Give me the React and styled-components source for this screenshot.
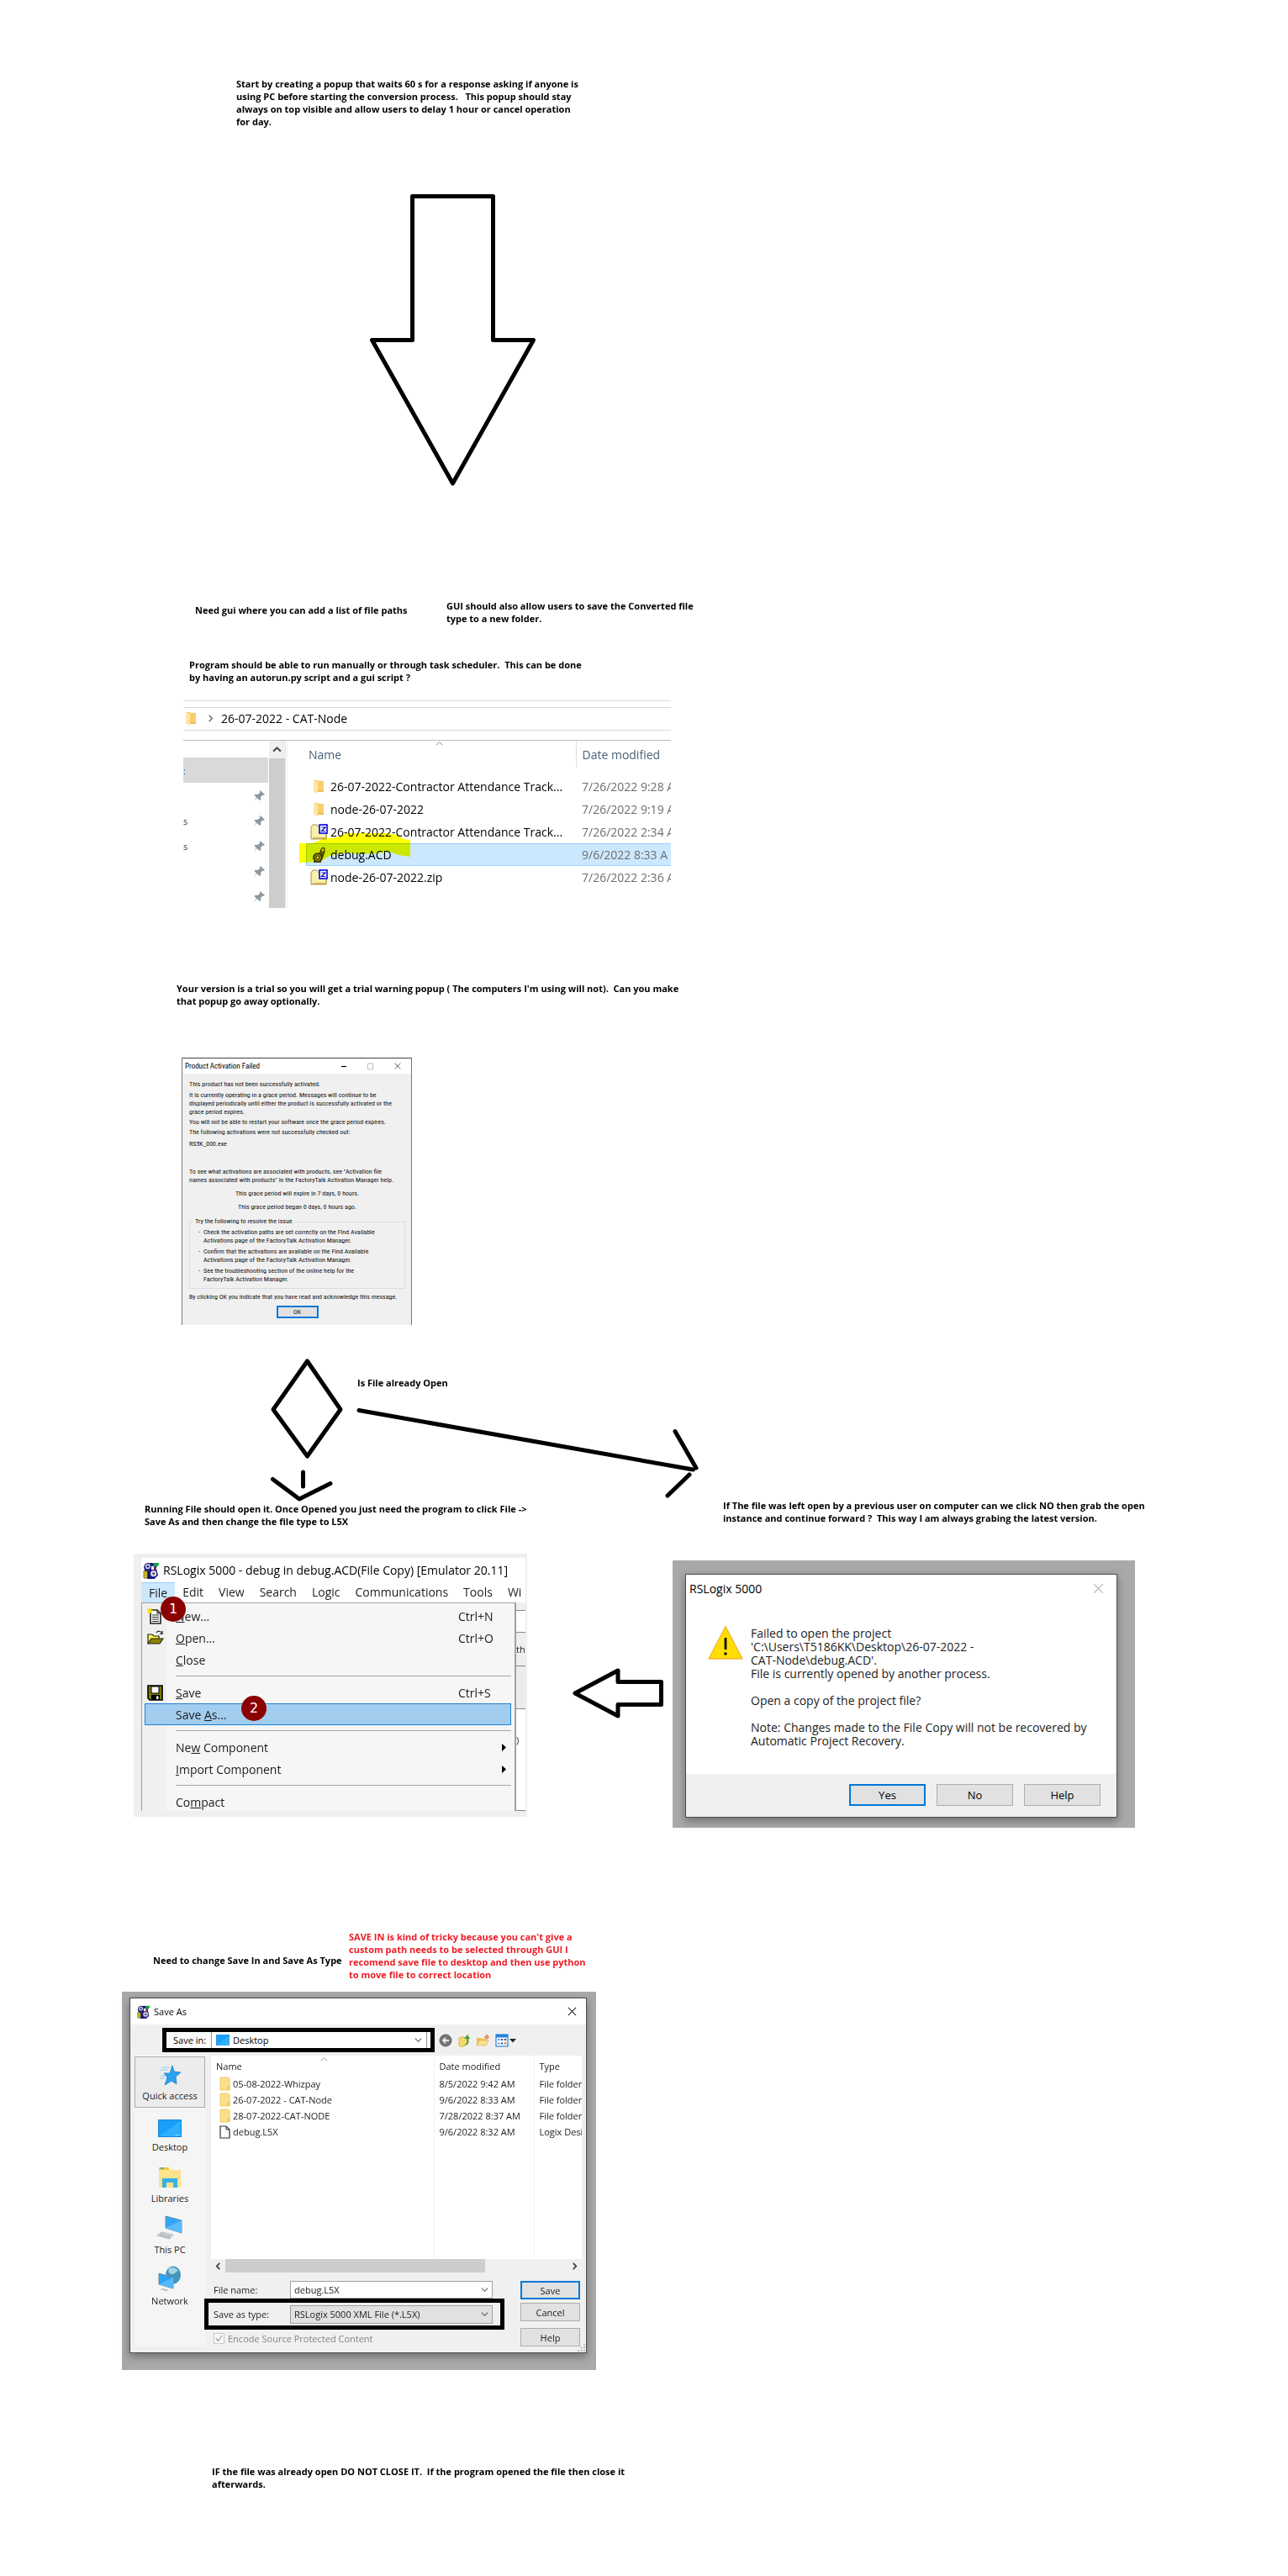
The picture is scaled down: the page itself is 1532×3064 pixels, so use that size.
import React from 'react';
import styled, { createGlobalStyle, css } from 'styled-components';

const UI = "'Open Sans', 'Noto Sans', sans-serif";
const SMALL = "'Roboto Condensed', Roboto, 'Open Sans', sans-serif";

const GlobalStyle = createGlobalStyle`
  *, *::before, *::after { box-sizing: border-box; }
  body { margin: 0; background: #fff; color: #000; font-family: ${UI}; }
  p, ul, table { margin: 0; padding: 0; }
  button, input, select { font: inherit; color: inherit; }
`;

/* ---------- canvas ---------- */
const Canvas = styled.main`
  position: relative;
  width: 100%;
  min-width: 1400px;
  min-height: 3064px;
  overflow: hidden;
  background: #fff;
`;
const Node = styled.div`
  position: absolute;
  left: ${(p) => p.$x}px;
  top: ${(p) => p.$y}px;
`;
const NoteText = styled.p`
  font-size: 11px;
  line-height: 15px;
  font-weight: 700;
  white-space: pre;
  color: ${(p) => (p.$red ? '#ed1c24' : '#000')};
`;
const Note = ({ x, y, red, children }) => (
  <Node $x={x} $y={y}><NoteText $red={red}>{children}</NoteText></Node>
);
const Drawing = styled.svg`
  display: block;
  fill: none;
  stroke: #000;
  stroke-width: 5;
  stroke-linejoin: round;
  stroke-linecap: round;
`;

/* ---------- icons ---------- */
const Svg = styled.svg`display: block; flex: none;`;

const Chevron = ({ dir = 'down', size = 9, color = '#444', w = 1.2 }) => {
  const d = { down: 'M1 3l4 4 4-4', up: 'M1 7l4-4 4 4', left: 'M7 1L3 5l4 4', right: 'M3 1l4 4-4 4' }[dir];
  return <Svg width={size} height={size} viewBox="0 0 10 10"><path d={d} fill="none" stroke={color} strokeWidth={w} /></Svg>;
};
const SlimFolder = () => (
  <Svg width="13" height="17" viewBox="0 0 13 17">
    <path d="M0 1h5l1 1h6v12H0z" fill="#f8cf6e" />
    <path d="M0 1l5 2v14l-5-2z" fill="#fde6a6" />
    <path d="M5 13h7v2H5z" fill="#eebd55" />
  </Svg>
);
const ZipIcon = () => (
  <Svg width="21" height="19" viewBox="0 0 21 19">
    <path d="M1 4l2-3h5l2 3h9v14H1z" fill="#f7efaa" stroke="#a8964a" />
    <path d="M3 17h16V7" fill="none" stroke="#c9b457" strokeWidth="2" />
    <rect x="11" y="1" width="9" height="10" fill="#fff" stroke="#0000e6" strokeWidth="1.6" />
    <path d="M13.500 4H18l-4.500 4.500H18" fill="none" stroke="#0000b0" strokeWidth="1.2" />
  </Svg>
);
const AcdIcon = () => (
  <Svg width="18" height="20" viewBox="0 0 18 20">
    <path d="M9 9l2-6 2-2 2 1v4l-2 6-3 5z" fill="#6b6300" stroke="#2e2a00" />
    <circle cx="7" cy="13" r="5" fill="#8f8400" stroke="#2e2a00" strokeWidth="1.6" />
    <circle cx="7" cy="13" r="2" fill="#e6dc3c" stroke="#2e2a00" />
    <circle cx="13" cy="4" r="1.4" fill="#e6dc3c" />
    <path d="M2 18h9" stroke="#4a4400" strokeWidth="2" />
  </Svg>
);
const PinIcon = () => (
  <Svg width="13" height="13" viewBox="0 0 13 13">
    <path d="M7.500 0l5.500 5-1.500 1-1-.5-2.500 2.500.3 3-1.500 1-3-3L0 13l3-4.500-2.500-2.500 1-1.300 3 .3L7.500 2.500 6.800 1z" fill="#8c979f" />
  </Svg>
);
const LogixIcon = ({ size = 19 }) => (
  <Svg width={size} height={size} viewBox="0 0 19 19">
    <path d="M1 6l2-4 6-1 8 1-2 5 2 8-4 4H5z" fill="#15157a" />
    <circle cx="5.500" cy="5" r="3.500" fill="#c4c8d2" stroke="#15157a" />
    <circle cx="5.500" cy="5" r="1.200" fill="#15157a" />
    <path d="M9 4h4v5H9z" fill="#fff" stroke="#15157a" />
    <path d="M12 1h6v2l-3 3-3-2z" fill="#12a63c" />
    <path d="M13 6h2v3h-2z" fill="#d61d1d" />
    <circle cx="12" cy="13" r="4" fill="#d3d6de" stroke="#15157a" />
    <circle cx="12" cy="13" r="1.400" fill="#555a80" />
    <path d="M1 10h4v8H1z" fill="#f3e11a" stroke="#333" strokeWidth=".7" />
    <path d="M3 11v6" stroke="#333" strokeDasharray="1 1" />
  </Svg>
);
const WarnIcon = () => (
  <Svg width="42" height="41" viewBox="0 0 42 41">
    <path d="M21 1.500L41 40H1z" fill="#ffde00" stroke="#f5b73a" strokeWidth="1.400" strokeLinejoin="round" />
    <path d="M21 15v14" stroke="#111" strokeWidth="2.800" />
    <circle cx="21" cy="34" r="1.800" fill="#111" />
  </Svg>
);
const NewIcon = () => (
  <Svg width="18" height="20" viewBox="0 0 18 20">
    <path d="M4 3h8l4 4v12H4z" fill="#fff" stroke="#222" strokeWidth="1.600" />
    <path d="M12 3v4h4M6 9h8M6 11.500h8M6 14h8M6 16.500h8" fill="none" stroke="#222" strokeWidth="1.200" />
    <path d="M3 0v8M0 4h7M0 1l6 6M6 1L0 7" stroke="#f2e600" strokeWidth="1.200" />
  </Svg>
);
const OpenIcon = () => (
  <Svg width="20" height="18" viewBox="0 0 20 18">
    <path d="M1 16V5h5l2 2h6v3" fill="#fff34a" stroke="#222" strokeWidth="1.200" />
    <path d="M1 16l4-6h14l-4 6z" fill="#8a8300" stroke="#222" strokeWidth="1.200" />
    <path d="M11 3c2-3 5-2 7 1m0-3v3.500h-3" fill="none" stroke="#222" strokeWidth="1.200" />
  </Svg>
);
const SaveIcon = () => (
  <Svg width="19" height="19" viewBox="0 0 19 19">
    <path d="M1 1h17v17H3l-2-2z" fill="#7a7a00" stroke="#000" strokeWidth="1.600" />
    <path d="M5 2h9v8H5z" fill="#fff" stroke="#000" />
    <path d="M5 12h10v6H5z" fill="#000" />
    <path d="M11 13.500h2.500V17H11z" fill="#fff" />
  </Svg>
);
const FolderIcon = () => (
  <Svg width="13" height="17" viewBox="0 0 13 17">
    <path d="M1 1h10l1 2v13H1z" fill="#fbdf8b" stroke="#f0cd6d" />
    <path d="M9 11h4v5H9z" fill="#f5cf68" />
  </Svg>
);
const PageIcon = () => (
  <Svg width="13" height="16" viewBox="0 0 13 16">
    <path d="M1 1h7l4 4v10H1z" fill="#fff" stroke="#333" strokeWidth="1.200" />
    <path d="M8 1v4h4" fill="none" stroke="#333" />
  </Svg>
);
const Monitor = ({ w, h }) => (
  <Svg width={w} height={h} viewBox="0 0 28 21" preserveAspectRatio="none">
    <rect x=".5" y=".5" width="27" height="20" fill="#18a0fb" stroke="#1784d8" />
    <path d="M1 20L27 2v18z" fill="#2fb0ff" />
    <path d="M21 18.500h5" stroke="#d8f1ff" strokeDasharray="1 1" />
  </Svg>
);
const StarIcon = () => (
  <Svg width="26" height="25" viewBox="0 0 26 25">
    <path d="M16 1l2 7 8 1-6 5 1 9-6-4-8 5 3-9-4-5h7z" fill="#2da2ee" stroke="#1c7fc8" strokeWidth=".8" />
    <path d="M3 3h10M1 6h10M2 13h5M1 16h6" stroke="#8ccdf6" />
  </Svg>
);
const LibraryIcon = () => (
  <Svg width="28" height="26" viewBox="0 0 28 26">
    <path d="M1 1h12v3h14v21H1z" fill="#ffe28c" />
    <path d="M1 1h12v3H1z" fill="#f9c935" />
    <path d="M3 1h4v2H3z" fill="#3ab3e6" />
    <path d="M5 25V14h18v11h-5v-6h-8v6z" fill="#36b1e8" />
  </Svg>
);
const PcIcon = () => (
  <Svg width="30" height="29" viewBox="0 0 30 29">
    <path d="M10 1l19 5v15L10 15z" fill="#33a6f7" stroke="#6d8ba3" />
    <path d="M10 15l19-9v15z" fill="#5bbcff" />
    <path d="M5 20l14 3-4 5-15-4z" fill="#d4d8dc" stroke="#a9afb5" strokeWidth=".8" />
    <path d="M4 22l12 3M3 24l12 3" stroke="#9097a0" strokeDasharray="2 1" />
  </Svg>
);
const NetworkIcon = () => (
  <Svg width="28" height="30" viewBox="0 0 28 30">
    <ellipse cx="18" cy="11" rx="9" ry="10.500" fill="#4496bb" />
    <path d="M13 3c4-2 8-1 11 3-4 1-4 5-8 4s-4-4-3-7z" fill="#a4d3e3" />
    <path d="M1 9l17 5v13L1 22z" fill="#2ba3f5" stroke="#6d8ba3" />
    <path d="M1 22L18 14v13z" fill="#56b9ff" />
    <path d="M5 27l8 2-3 1-7-2z" fill="#aab4bc" />
  </Svg>
);
const BackIcon = () => (
  <Svg width="16" height="16" viewBox="0 0 16 16">
    <circle cx="8" cy="8" r="7" fill="#777" stroke="#5c5c5c" />
    <path d="M12 8H5m3-3L5 8l3 3" fill="none" stroke="#e8e8e8" strokeWidth="1.800" />
  </Svg>
);
const UpFolderIcon = () => (
  <Svg width="14" height="16" viewBox="0 0 14 16">
    <path d="M1 5l5-2 1 2 5-1v8l-8 4-3-2z" fill="#f6d873" stroke="#d6ad3f" strokeWidth=".8" />
    <path d="M6 14c4-1 5-4 4-8H7l4-5 3 5h-2c1 5-1 8-6 8z" fill="#3aa537" />
  </Svg>
);
const NewFolderIcon = () => (
  <Svg width="16" height="16" viewBox="0 0 16 16">
    <path d="M1 5h5l1 1h5v8H1z" fill="#eec04e" />
    <path d="M1 14l3-6h11l-3 6z" fill="#fbe08c" stroke="#dcb24c" strokeWidth=".7" />
    <circle cx="13" cy="4" r="2.300" fill="#f26b3a" />
    <path d="M13 0v8M9 4h7" stroke="#f7a06f" />
  </Svg>
);
const ViewIcon = () => (
  <Svg width="25" height="16" viewBox="0 0 25 16">
    <rect x="1" y="1" width="14" height="14" fill="#fff" stroke="#2a83dd" strokeWidth="1.200" />
    <path d="M1 1h14v3.500H1z" fill="#2a83dd" />
    <path d="M3 7h2.500M3 11.500h2.500" stroke="#7a9fd0" strokeWidth="2" />
    <path d="M6.800 7h2.500M6.800 11.500h2.500" stroke="#2a62c4" strokeWidth="2" />
    <path d="M10.800 7h2.500" stroke="#555" strokeWidth="2" />
    <path d="M10.800 11.500h2.500" stroke="#e05a2a" strokeWidth="2" />
    <path d="M17 6h8l-4 4.500z" fill="#222" />
  </Svg>
);
const Grip = () => (
  <Svg width="9" height="9" viewBox="0 0 9 9"><path d="M7 0h2v2H7zM7 3.500h2v2H7zM7 7h2v2H7zM3.500 3.500h2v2h-2zM3.500 7h2v2h-2zM0 7h2v2H0z" fill="#bbb" /></Svg>
);
const CloseIcon = ({ color, size = 12 }) => (
  <Svg width={size} height={size} viewBox="0 0 12 12"><path d="M1 1l10 10M11 1L1 11" stroke={color} strokeWidth="1.100" /></Svg>
);

/* ---------- shared controls ---------- */
const Row = styled.div`display: flex; align-items: center; gap: ${(p) => p.$gap || 0}px;`;
const Grow = styled.span`flex: 1;`;
const IconButton = styled.button`
  display: flex;
  align-items: center;
  justify-content: center;
  padding: 0;
  border: 0;
  background: none;
`;
const PushButton = styled.button`
  height: ${(p) => p.$h}px;
  width: ${(p) => p.$w}px;
  padding: 0;
  border: ${(p) => (p.$primary ? '2px solid #0078d7' : '1px solid #adadad')};
  background: #e1e1e1;
  font-size: ${(p) => p.$font}px;
  line-height: 1;
`;
const Backdrop = styled.section`
  width: ${(p) => p.$w}px;
  padding: ${(p) => p.$pad};
  background: #a9a9a9;
`;
const Dialog = styled.div`
  display: flex;
  flex-direction: column;
  border: 1px solid #4d4d4d;
  background: ${(p) => p.$bg || '#fff'};
  box-shadow: 0 4px 10px rgba(0, 0, 0, .35);
`;

/* ---------- file explorer ---------- */
const Explorer = styled.section`
  position: relative;
  width: 580px;
  overflow: hidden;
  border-top: 1px solid #d9d9d9;
  font-size: 14px;
`;
const Address = styled.div`
  display: flex;
  align-items: center;
  height: 28px;
  margin: 7px 0 11px;
  padding: 0 0 2px 3px;
  border: solid #d9d9d9;
  border-width: 1px 0;
`;
const Crumb = styled.span`margin-left: ${(p) => p.$gap}px; line-height: 19px; white-space: nowrap;`;
const Panes = styled.div`display: flex; height: 200px; border-top: 1px solid #bdbdbd;`;
const SidePane = styled.div`width: 101px; padding-top: 20px;`;
const SideRow = styled.div`
  display: flex;
  align-items: center;
  justify-content: space-between;
  height: 30px;
  padding-right: 4px;
  background: ${(p) => (p.$active ? '#d9d9d9' : 'transparent')};
  color: ${(p) => (p.$active ? '#0078d7' : '#16324f')};
  font-size: 11px;
`;
const VScroll = styled.div`
  width: 20px;
  margin-left: 1px;
  background: #cdcdcd;
  border-right: 1px solid #e8e8e8;
`;
const VScrollButton = styled(IconButton)`width: 100%; height: 21px; background: #f0f0f0;`;
const ListPane = styled.div`flex: 1; padding-left: 22px; margin-left: 1px; border-left: 1px solid #f0f0f0; overflow: hidden;`;
const FileTable = styled.table`
  width: 455px;
  table-layout: fixed;
  border-collapse: collapse;
  th { position: relative; height: 32px; padding: 0 0 0 3px; text-align: left; font-weight: 400; color: #4c607a; }
  th + th { padding-left: 7px; border-left: 1px solid #e0e0e0; }
  td { height: 27px; padding: 0 0 0 5px; white-space: nowrap; line-height: 19px; }
  td + td { padding-left: 7px; color: #6d6d6d; }
`;
const SortMark = styled.span`position: absolute; left: 154px; top: -1px;`;
const Spacer = styled.tr`td { height: 9px; }`;
const FileRow = styled.tr`
  ${(p) => p.$selected && css`
    background: #cce8ff;
    td { box-shadow: inset 0 1px #99d1ff, inset 0 -1px #99d1ff; }
    td:first-child { box-shadow: inset 1px 1px #99d1ff, inset 0 -1px #99d1ff; }
  `}
`;
const IconSlot = styled.span`display: flex; flex: none; justify-content: center; width: 21px;`;
const Highlight = styled.svg`
  position: absolute;
  left: 138px;
  top: 157px;
  mix-blend-mode: multiply;
  pointer-events: none;
`;
const files = [
  ['26-07-2022-Contractor Attendance Track...', '7/26/2022 9:28 AM', SlimFolder],
  ['node-26-07-2022', '7/26/2022 9:19 AM', SlimFolder],
  ['26-07-2022-Contractor Attendance Track...', '7/26/2022 2:34 AM', ZipIcon],
  ['debug.ACD', '9/6/2022 8:33 A', AcdIcon],
  ['node-26-07-2022.zip', '7/26/2022 2:36 AM', ZipIcon],
];
const ExplorerWindow = () => (
  <Explorer>
    <Address>
      <SlimFolder />
      <Crumb $gap={12}><Chevron dir="right" color="#777" w={1.8} /></Crumb>
      <Crumb $gap={8}>26-07-2022 - CAT-Node</Crumb>
    </Address>
    <Panes>
      <SidePane>
        <SideRow $active>:</SideRow>
        {['', 's', 's', '', ''].map((t, i) => (
          <SideRow key={i}><span>{t}</span><PinIcon /></SideRow>
        ))}
      </SidePane>
      <VScroll><VScrollButton aria-label="Scroll up"><Chevron dir="up" size={11} w={1.8} /></VScrollButton></VScroll>
      <ListPane>
        <FileTable>
          <colgroup><col width="321" /><col /></colgroup>
          <thead>
            <tr>
              <th>Name<SortMark><Chevron dir="up" size={9} color="#777" w={1} /></SortMark></th>
              <th>Date modified</th>
            </tr>
          </thead>
          <tbody>
            <Spacer><td /></Spacer>
            {files.map(([name, date, Icon], i) => (
              <FileRow key={i} $selected={i === 3}>
                <td><Row><IconSlot><Icon /></IconSlot><Crumb $gap={3}>{name}</Crumb></Row></td>
                <td>{date}</td>
              </FileRow>
            ))}
          </tbody>
        </FileTable>
      </ListPane>
    </Panes>
    <Highlight width="132" height="36" viewBox="0 0 132 36">
      <path d="M0 12h16l12-5 16-2 12-5h48l12 2 8 5 8 1v20l-14-2-10-4-16 2-20 1-16-2-20 4-8 5-20 3H0z" fill="#ff0" />
    </Highlight>
  </Explorer>
);

/* ---------- activation dialog ---------- */
const Activation = styled.section`
  width: 274px;
  border: solid #777;
  border-width: 1px 1px 0;
  border-top-color: #444;
  background: #f0f0f0;
  font-family: ${SMALL};
  font-size: 8px;
  line-height: 10px;
  color: #111;
`;
const ActivationTitle = styled.header`
  display: flex;
  align-items: center;
  height: 18px;
  padding: 0 12px 0 3px;
  background: #fff;
  color: #000;
  font-size: 9px;
`;
const ActivationBody = styled.div`display: flex; flex-direction: column; padding: 0 7px 8px 8px;`;
const Para = styled.p`
  margin-top: ${(p) => p.$gap}px;
  white-space: pre;
  text-align: ${(p) => (p.$center ? 'center' : 'left')};
`;
const Group = styled.fieldset`
  margin: 7px 0 0;
  padding: 3px 10px 5px;
  border: 1px solid #dcdcdc;
  legend { margin-left: -7px; padding: 0 3px; }
`;
const Tips = styled.ul`
  display: flex;
  flex-direction: column;
  gap: 3px;
  list-style: none;
  li { display: flex; gap: 4px; white-space: pre; }
`;
const ButtonLine = styled.div`display: flex; justify-content: center; margin-top: 5px;`;
const ActivationWindow = () => (
  <Activation>
    <ActivationTitle>
      Product Activation Failed<Grow />
      <Row $gap={25}>
        <IconButton aria-label="Minimize"><Svg width="6" height="9"><path d="M0 4.500h6" stroke="#000" strokeWidth="1.200" /></Svg></IconButton>
        <IconButton aria-label="Maximize"><Svg width="7" height="9" viewBox="0 0 7 9"><path d="M.5 1h6v7h-6z" fill="none" stroke="#bbb" /></Svg></IconButton>
        <IconButton aria-label="Close"><CloseIcon color="#333" size={8} /></IconButton>
      </Row>
    </ActivationTitle>
    <ActivationBody>
      <Para $gap={8}>This product has not been successfully activated.</Para>
      <Para $gap={3}>{'It is currently operating in a grace period. Messages will continue to be\ndisplayed periodically until either the product is successfully activated or the\ngrace period expires.'}</Para>
      <Para $gap={2}>You will not be able to restart your software once the grace period expires.</Para>
      <Para $gap={2}>The following activations were not successfully checked out:</Para>
      <Para $gap={4}>RS5K_000.exe</Para>
      <Para $gap={23}>{'To see what activations are associated with products, see "Activation file\nnames associated with products" in the FactoryTalk Activation Manager help.'}</Para>
      <Para $gap={6} $center>This grace period will expire in 7 days, 0 hours.</Para>
      <Para $gap={6} $center>This grace period began 0 days, 0 hours ago.</Para>
      <Group>
        <legend>Try the following to resolve the issue</legend>
        <Tips>
          <li><span>-</span><span>{'Check the activation paths are set correctly on the Find Available\nActivations page of the FactoryTalk Activation Manager.'}</span></li>
          <li><span>-</span><span>{'Confirm that the activations are available on the Find Available\nActivations page of the FactoryTalk Activation Manager.'}</span></li>
          <li><span>-</span><span>{'See the troubleshooting section of the online help for the\nFactoryTalk Activation Manager.'}</span></li>
        </Tips>
      </Group>
      <Para $gap={5}>By clicking OK you indicate that you have read and acknowledge this message.</Para>
      <ButtonLine><PushButton $primary $h={15} $w={50} $font={8}>OK</PushButton></ButtonLine>
    </ActivationBody>
  </Activation>
);

/* ---------- RSLogix menu ---------- */
const LogixFrame = styled.section`
  position: relative;
  width: 468px;
  padding: 5px 2px 7px 9px;
  background: #efefef;
`;
const LogixInner = styled.div`height: 301px; overflow: hidden; background: #fff; font-size: 14px; color: #1c1c1c;`;
const LogixTitle = styled.header`display: flex; align-items: center; gap: 4px; height: 29px; padding-left: 2px; color: #000; white-space: nowrap;`;
const MenuBar = styled.nav`display: flex; height: 24px;`;
const MenuTab = styled.button`
  flex: none;
  padding: 0 9px;
  border: ${(p) => (p.$open ? '1px solid #99d1ff' : '0')};
  border-width: ${(p) => (p.$open ? '1px 0 0' : '0')};
  background: ${(p) => (p.$open ? '#cce8ff' : 'none')};
  line-height: 22px;
`;
const MenuArea = styled.div`display: flex;`;
const Menu = styled.div`
  width: 446px;
  padding: 2px 4px 0 3px;
  border: solid #a0a0a0;
  border-width: 1px 2px 0 1px;
  background: linear-gradient(90deg, #f0f0f0 29px, #f6f6f6 29px);
`;
const MenuItem = styled.button`
  display: flex;
  align-items: center;
  width: 100%;
  height: 26px;
  padding: 0 5px 0 2px;
  border: 1px solid ${(p) => (p.$active ? '#1883d7' : 'transparent')};
  background: ${(p) => (p.$active ? '#a3cdee' : 'none')};
  text-align: left;
`;
const MenuIcon = styled.span`width: 34px; flex: none;`;
const Shortcut = styled.span`width: 57px;`;
const Separator = styled.hr`height: 1px; margin: 6px 0 6px 37px; border: 0; background: #a8a8a8;`;
const Behind = styled.div`flex: 1; min-width: 0; display: flex; flex-direction: column; background: #efefef;`;
const Patch = styled.div`
  height: ${(p) => p.$h}px;
  overflow: hidden;
  border-bottom: 1px solid #888;
  background: ${(p) => p.$bg};
  font-size: 11px;
  line-height: ${(p) => p.$h}px;
`;
const Paren = styled.span`display: block; line-height: 74px;`;
const Badge = styled.span`
  position: absolute;
  left: ${(p) => p.$x}px;
  top: ${(p) => p.$y}px;
  display: flex;
  align-items: center;
  justify-content: center;
  width: 30px;
  height: 30px;
  border-radius: 50%;
  background: #8b0000;
  color: #fff;
  font: 16px/1 'DejaVu Sans', sans-serif;
`;
const SubArrow = () => <Svg width="5" height="9" viewBox="0 0 5 9"><path d="M0 0l5 4.500L0 9z" fill="#000" /></Svg>;
const LogixWindow = () => (
  <LogixFrame>
    <LogixInner>
      <LogixTitle><LogixIcon size={20} />RSLogix 5000 - debug in debug.ACD(File Copy) [Emulator 20.11]</LogixTitle>
      <MenuBar>
        <MenuTab $open>File</MenuTab><MenuTab>Edit</MenuTab><MenuTab>View</MenuTab><MenuTab>Search</MenuTab>
        <MenuTab>Logic</MenuTab><MenuTab>Communications</MenuTab><MenuTab>Tools</MenuTab><MenuTab>Wi</MenuTab>
      </MenuBar>
      <MenuArea>
        <Menu>
          <MenuItem><MenuIcon><NewIcon /></MenuIcon><span><u>N</u>ew...</span><Grow /><Shortcut>Ctrl+N</Shortcut></MenuItem>
          <MenuItem><MenuIcon><OpenIcon /></MenuIcon><span><u>O</u>pen...</span><Grow /><Shortcut>Ctrl+O</Shortcut></MenuItem>
          <MenuItem><MenuIcon /><span><u>C</u>lose</span></MenuItem>
          <Separator />
          <MenuItem><MenuIcon><SaveIcon /></MenuIcon><span><u>S</u>ave</span><Grow /><Shortcut>Ctrl+S</Shortcut></MenuItem>
          <MenuItem $active><MenuIcon /><span>Save <u>A</u>s...</span></MenuItem>
          <Separator />
          <MenuItem><MenuIcon /><span>Ne<u>w</u> Component</span><Grow /><SubArrow /></MenuItem>
          <MenuItem><MenuIcon /><span><u>I</u>mport Component</span><Grow /><SubArrow /></MenuItem>
          <Separator />
          <MenuItem><MenuIcon /><span>Co<u>m</u>pact</span></MenuItem>
        </Menu>
        <Behind>
          <Patch $h={10} $bg="#efefef" />
          <Patch $h={26} $bg="#fff" />
          <Patch $h={40} $bg="#efefef">th</Patch>
          <Patch $h={51} $bg="#ececec" />
          <Patch $h={121} $bg="#fff"><Paren>)</Paren></Patch>
        </Behind>
      </MenuArea>
    </LogixInner>
    <Badge $x={32} $y={51}>1</Badge>
    <Badge $x={128} $y={169}>2</Badge>
  </LogixFrame>
);

/* ---------- failed-to-open dialog ---------- */
const FailTitle = styled.header`
  display: flex;
  align-items: center;
  justify-content: space-between;
  height: 32px;
  padding: 0 15px 0 4px;
  font-size: 14px;
`;
const FailBody = styled.div`
  display: flex;
  gap: 9px;
  padding: 28px 0 31px 26px;
  font-size: 14px;
  line-height: 16px;
  white-space: pre;
  color: #222;
`;
const FailMessage = styled.p`padding: 2px 0 0;`;
const FailFooter = styled.footer`
  display: flex;
  justify-content: flex-end;
  gap: 13px;
  padding: 12px 19px 13px;
  background: #f0f0f0;
`;
const FailWindow = () => (
  <Backdrop $w={550} $pad="16px 21px 12px 15px">
    <Dialog>
      <FailTitle>RSLogix 5000<IconButton aria-label="Close"><CloseIcon color="#b5b5b5" size={13} /></IconButton></FailTitle>
      <FailBody>
        <WarnIcon />
        <FailMessage>{"Failed to open the project\n'C:\\Users\\T5186KK\\Desktop\\26-07-2022 -\nCAT-Node\\debug.ACD'.\nFile is currently opened by another process.\n\nOpen a copy of the project file?\n\nNote: Changes made to the File Copy will not be recovered by\nAutomatic Project Recovery."}</FailMessage>
      </FailBody>
      <FailFooter>
        <PushButton $primary $h={26} $w={91} $font={13}>Yes</PushButton>
        <PushButton $h={26} $w={91} $font={13}>No</PushButton>
        <PushButton $h={26} $w={91} $font={13}>Help</PushButton>
      </FailFooter>
    </Dialog>
  </Backdrop>
);

/* ---------- Save As dialog ---------- */
const SaveTitle = styled.header`
  display: flex;
  align-items: center;
  gap: 4px;
  height: 31px;
  padding: 0 11px 0 8px;
  background: #fff;
  font-size: 11px;
`;
const Toolbar = styled.div`display: flex; align-items: center; padding: 4px 0 0 38px; font-size: 11px;`;
const Marker = styled.div`
  display: flex;
  align-items: center;
  border: 5px solid #000;
`;
const LocationMarker = styled(Marker)`width: 324px; height: 29px; padding-right: 4px; background: #fafafa;`;
const LocationLabel = styled.label`width: 53px; padding-left: 8px;`;
const LocationBox = styled.span`
  display: flex;
  flex: 1;
  align-items: center;
  gap: 4px;
  height: 100%;
  padding: 0 5px;
  border: solid #999;
  border-width: 0 1px;
  background: #fff;
`;
const PlainSelect = styled.select`
  flex: 1;
  min-width: 0;
  height: 100%;
  padding: 0;
  border: 0;
  appearance: none;
  background: none;
`;
const Tools = styled.div`display: flex; gap: 7px; margin-left: 5px;`;
const SaveMain = styled.div`display: flex; padding: 3px 5px 7px;`;
const Places = styled.nav`
  display: flex;
  flex-direction: column;
  flex: none;
  width: 84px;
  padding-top: 2px;
  background: #f5f5f5;
`;
const Place = styled.button`
  display: flex;
  flex-direction: column;
  align-items: center;
  justify-content: flex-end;
  gap: 4px;
  height: 61px;
  padding: 0 0 6px;
  border: 1px solid ${(p) => (p.$active ? '#adadad' : 'transparent')};
  background: ${(p) => (p.$active ? '#ececec' : 'none')};
  font-size: 11px;
  line-height: 15px;
  color: #222;
`;
const SavePane = styled.div`display: flex; flex-direction: column; flex: 1; min-width: 0; margin: 1px 0 0 7px; font-size: 11px; color: #222;`;
const SaveTable = styled.table`
  width: 100%;
  height: 242px;
  table-layout: fixed;
  border-collapse: collapse;
  background: #fff;
  th { position: relative; height: 24px; padding: 0 0 0 6px; font-weight: 400; text-align: left; }
  td { height: 19px; padding: 0 0 0 10px; line-height: 15px; white-space: nowrap; overflow: hidden; }
  th + th, td + td { padding-left: 6px; border-left: 1px solid #edf3f8; }
  tr:last-child td { height: auto; }
`;
const SaveSort = styled.span`position: absolute; left: 130px; top: 0;`;
const FileName = styled.span`margin-left: 3px;`;
const HScroll = styled.div`display: flex; align-items: center; height: 16px; padding: 0 4px;`;
const HThumb = styled.div`width: 309px; height: 16px; margin: 0 auto 0 4px; background: #cdcdcd;`;
const SaveForm = styled.form`display: flex; justify-content: space-between; padding-right: 2px;`;
const Fields = styled.div`width: 349px; padding-top: 10px;`;
const FieldRow = styled.div`display: flex; align-items: center; height: 21px; padding-left: 3px;`;
const FieldLabel = styled.label`width: 91px; flex: none;`;
const Combo = styled.span`
  display: flex;
  align-items: center;
  width: 241px;
  height: ${(p) => p.$h}px;
  padding: 0 4px;
  border: 1px solid #a0a0a0;
  background: ${(p) => p.$bg};
`;
const TextBox = styled.input`flex: 1; min-width: 0; height: 100%; padding: 0; border: 0; outline: 0; background: none;`;
const TypeMarker = styled(Marker)`width: 357px; height: 37px; margin-left: -8px; padding-left: 6px;`;
const CheckRow = styled.div`display: flex; align-items: center; gap: 4px; height: 20px; padding-left: 3px; color: #838383;`;
const CheckWrap = styled.span`position: relative; display: flex;`;
const CheckBox = styled.input`width: 13px; height: 13px; margin: 0; appearance: none; border: 1px solid #c8c8c8; background: #f8f8f8;`;
const Tick = styled.svg`position: absolute; left: 2px; top: 2px; pointer-events: none;`;
const Buttons = styled.div`display: flex; flex-direction: column; width: 71px; padding-top: 10px;`;
const Gap = styled.span`height: ${(p) => p.$h}px;`;
const GripCorner = styled.span`position: absolute; right: 13px; bottom: 22px;`;
const Wrap = styled.div`position: relative;`;

const savedFiles = [
  ['05-08-2022-Whizpay', '8/5/2022 9:42 AM', 'File folder'],
  ['26-07-2022 - CAT-Node', '9/6/2022 8:33 AM', 'File folder'],
  ['28-07-2022-CAT-NODE', '7/28/2022 8:37 AM', 'File folder'],
  ['debug.L5X', '9/6/2022 8:32 AM', 'Logix Desi'],
];
const SaveAsWindow = () => (
  <Wrap>
    <Backdrop $w={564} $pad="7px 11px 20px 9px">
      <Dialog $bg="#f0f0f0">
        <SaveTitle><LogixIcon size={16} />Save As<Grow /><IconButton aria-label="Close"><CloseIcon color="#222" size={11} /></IconButton></SaveTitle>
        <Toolbar>
          <LocationMarker>
            <LocationLabel htmlFor="location">Save in:</LocationLabel>
            <LocationBox>
              <Monitor w={16} h={13} />
              <PlainSelect id="location"><option>Desktop</option></PlainSelect>
              <Chevron color="#555" />
            </LocationBox>
          </LocationMarker>
          <Tools>
            <IconButton aria-label="Back"><BackIcon /></IconButton>
            <IconButton aria-label="Up one level"><UpFolderIcon /></IconButton>
            <IconButton aria-label="New folder"><NewFolderIcon /></IconButton>
            <IconButton aria-label="View"><ViewIcon /></IconButton>
          </Tools>
        </Toolbar>
        <SaveMain>
          <Places>
            <Place $active><StarIcon />Quick access</Place>
            <Place><Monitor w={28} h={21} />Desktop</Place>
            <Place><LibraryIcon />Libraries</Place>
            <Place><PcIcon />This PC</Place>
            <Place><NetworkIcon />Network</Place>
          </Places>
          <SavePane>
            <SaveTable>
              <colgroup><col width="265" /><col width="119" /><col /></colgroup>
              <thead>
                <tr>
                  <th>Name<SaveSort><Chevron dir="up" color="#888" w={1} /></SaveSort></th>
                  <th>Date modified</th><th>Type</th>
                </tr>
              </thead>
              <tbody>
                {savedFiles.map(([name, date, type], i) => (
                  <tr key={name}>
                    <td><Row>{i < 3 ? <FolderIcon /> : <PageIcon />}<FileName>{name}</FileName></Row></td>
                    <td>{date}</td><td>{type}</td>
                  </tr>
                ))}
                <tr><td /><td /><td /></tr>
              </tbody>
            </SaveTable>
            <HScroll><Chevron dir="left" w={2} /><HThumb /><Chevron dir="right" w={2} /></HScroll>
            <SaveForm onSubmit={(e) => e.preventDefault()}>
              <Fields>
                <FieldRow>
                  <FieldLabel htmlFor="filename">File name:</FieldLabel>
                  <Combo $h={21} $bg="#fff"><TextBox id="filename" defaultValue="debug.L5X" /><Chevron color="#555" /></Combo>
                </FieldRow>
                <TypeMarker>
                  <FieldLabel htmlFor="filetype">Save as type:</FieldLabel>
                  <Combo $h={22} $bg="#e1e1e1">
                    <PlainSelect id="filetype"><option>RSLogix 5000 XML File (*.L5X)</option></PlainSelect>
                    <Chevron color="#555" />
                  </Combo>
                </TypeMarker>
                <CheckRow>
                  <CheckWrap>
                    <CheckBox type="checkbox" id="encode" defaultChecked disabled />
                    <Tick width="9" height="9" viewBox="0 0 9 9"><path d="M1 4.500l2.500 3L8 1" fill="none" stroke="#999" strokeWidth="1.200" /></Tick>
                  </CheckWrap>
                  <label htmlFor="encode">Encode Source Protected Content</label>
                </CheckRow>
              </Fields>
              <Buttons>
                <PushButton $primary $h={22} $w={71} $font={11}>Save</PushButton>
                <Gap $h={4} />
                <PushButton type="button" $h={22} $w={71} $font={11}>Cancel</PushButton>
                <Gap $h={8} />
                <PushButton type="button" $h={22} $w={71} $font={11}>Help</PushButton>
              </Buttons>
            </SaveForm>
          </SavePane>
        </SaveMain>
      </Dialog>
    </Backdrop>
    <GripCorner><Grip /></GripCorner>
  </Wrap>
);

/* ---------- page ---------- */
export default function App() {
  return (
    <>
      <GlobalStyle />
      <Canvas>
        <Note x={281} y={92}>{'Start by creating a popup that waits 60 s for a response asking if anyone is\nusing PC before starting the conversion process.   This popup should stay\nalways on top visible and allow users to delay 1 hour or cancel operation\nfor day.'}</Note>
        <Node $x={438} $y={229}>
          <Drawing width="202" height="352" viewBox="438 229 202 352">
            <path d="M490.500 233.500h96v171h48L538.500 575 442.500 404.500h48z" />
          </Drawing>
        </Node>

        <Note x={232} y={718}>Need gui where you can add a list of file paths</Note>
        <Note x={531} y={713}>{'GUI should also allow users to save the Converted file\ntype to a new folder.'}</Note>
        <Note x={225} y={783}>{'Program should be able to run manually or through task scheduler.  This can be done\nby having an autorun.py script and a gui script ?'}</Note>
        <Node $x={218} $y={833}><ExplorerWindow /></Node>

        <Note x={210} y={1168}>{"Your version is a trial so you will get a trial warning popup ( The computers I'm using will not).  Can you make\nthat popup go away optionally."}</Note>
        <Node $x={216} $y={1258}><ActivationWindow /></Node>

        <Node $x={318} $y={1612}>
          <Drawing width="520" height="180" viewBox="318 1612 520 180">
            <path d="M365.500 1619L405 1676.500 365.500 1732 325 1676.500z" />
            <path d="M360.500 1751v17M324.500 1759.500L356 1783l37-18.500" />
            <path d="M427 1677.500L824.500 1748" />
            <path d="M803 1702.500L828 1746M820 1754L794 1779" />
          </Drawing>
        </Node>
        <Note x={425} y={1637}>Is File already Open</Note>

        <Note x={172} y={1787}>{'Running File should open it. Once Opened you just need the program to click File ->\nSave As and then change the file type to L5X'}</Note>
        <Note x={860} y={1783}>{'If The file was left open by a previous user on computer can we click NO then grab the open\ninstance and continue forward ?  This way I am always grabing the latest version.'}</Note>
        <Node $x={159} $y={1848}><LogixWindow /></Node>
        <Node $x={678} $y={1982}>
          <Drawing width="114" height="64" viewBox="678 1982 114 64">
            <path d="M735 1987v13.500h51.500v27H735v13.500L684 2014z" />
          </Drawing>
        </Node>
        <Node $x={800} $y={1856}><FailWindow /></Node>

        <Note x={182} y={2324}>Need to change Save In and Save As Type</Note>
        <Note x={415} y={2296} red>{"SAVE IN is kind of tricky because you can't give a\ncustom path needs to be selected through GUI I\nrecomend save file to desktop and then use python\nto move file to correct location"}</Note>
        <Node $x={145} $y={2369}><SaveAsWindow /></Node>

        <Note x={252} y={2932}>{'IF the file was already open DO NOT CLOSE IT.  If the program opened the file then close it\nafterwards.'}</Note>
      </Canvas>
    </>
  );
}
